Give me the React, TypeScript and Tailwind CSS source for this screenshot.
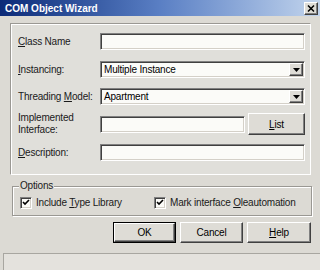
import React from 'react';

const font = { fontFamily: '"Liberation Sans", Arial, sans-serif' };

const sunken =
  'border border-t-[#808080] border-l-[#808080] border-b-white border-r-white shadow-[inset_1px_1px_0_#404040,inset_-1px_-1px_0_#d4d0c8] bg-[#fbfbf8]';
const raised =
  'border border-t-white border-l-white border-b-[#404040] border-r-[#404040] shadow-[inset_-1px_-1px_0_#808080] bg-[#dedcd6]';

function U({ c }: { c: string }) {
  return <span className="underline underline-offset-1">{c}</span>;
}

function Label({ children }: { children: React.ReactNode }) {
  return <div className="w-[82px] shrink-0 leading-[12px] text-[#1a1a1a]">{children}</div>;
}

function Select({ value }: { value: string }) {
  return (
    <div className={`${sunken} flex-1 h-full flex items-center`}>
      <span className="flex-1 pl-[3px] text-black">{value}</span>
      <div className={`${raised} w-[14px] h-[13px] mr-[1px] flex items-center justify-center`}>
        <svg width="7" height="4" viewBox="0 0 7 4">
          <path d="M0 0h7L3.5 4z" fill="#000" />
        </svg>
      </div>
    </div>
  );
}

function Check({ label }: { label: React.ReactNode }) {
  return (
    <div className="flex items-center gap-[4px]">
      <div className={`${sunken} w-[12px] h-[12px] flex items-center justify-center`}>
        <svg width="8" height="7" viewBox="0 0 8 7">
          <path d="M1 3l2 2 4-4" stroke="#000" strokeWidth="1.6" fill="none" />
        </svg>
      </div>
      <span>{label}</span>
    </div>
  );
}

export default function App() {
  return (
    <div className="w-[320px] h-[270px] bg-[#dcdad4] text-[10px] tracking-[-0.2px] flex flex-col overflow-hidden" style={font}>
      {/* title bar */}
      <div className="h-[16px] shrink-0 flex items-center bg-gradient-to-r from-[#0c2a78] via-[#5a7fc4] to-[#c2d4ec]">
        <span className="flex-1 pl-[5px] text-white font-bold text-[10px] tracking-normal">COM Object Wizard</span>
        <div className={`${raised} w-[14px] h-[13px] mr-[2px] flex items-center justify-center`}>
          <svg width="8" height="7" viewBox="0 0 8 7">
            <path d="M1 0.5l6 6M7 0.5l-6 6" stroke="#000" strokeWidth="1.5" />
          </svg>
        </div>
      </div>

      {/* main panel */}
      <div className="ml-[10px] mt-[7px] w-[301px] h-[152px] shrink-0 border border-t-[#9a9893] border-l-[#9a9893] border-b-white border-r-white shadow-[inset_1px_1px_0_white] bg-[#e0dfda] flex flex-col pl-[7px] pr-[5px]">
        <div className="mt-[9px] h-[17px] flex items-center">
          <Label>
            <U c="C" />lass Name
          </Label>
          <div className={`${sunken} flex-1 h-full`} />
        </div>
        <div className="mt-[11px] h-[17px] flex items-center">
          <Label>
            <U c="I" />nstancing:
          </Label>
          <Select value="Multiple Instance" />
        </div>
        <div className="mt-[10px] h-[17px] flex items-center">
          <Label>
            Threading <U c="M" />odel:
          </Label>
          <Select value="Apartment" />
        </div>
        <div className="mt-[8px] h-[22px] flex items-center">
          <Label>
            Implemented
            <br />
            Interface:
          </Label>
          <div className={`${sunken} w-[145px] h-[17px] mt-[1px]`} />
          <div className={`${raised} ml-[3px] flex-1 h-full flex items-center justify-center text-black`}>
            <U c="L" />ist
          </div>
        </div>
        <div className="mt-[9px] h-[17px] flex items-center">
          <Label>
            <U c="D" />escription:
          </Label>
          <div className={`${sunken} flex-1 h-full`} />
        </div>
      </div>

      {/* options group */}
      <div className="relative ml-[12px] mt-[11px] w-[300px] h-[30px] shrink-0 border border-[#9a9893] shadow-[inset_1px_1px_0_white,1px_1px_0_white] flex items-center pl-[7px] text-[#1a1a1a]">
        <span className="absolute left-[6px] top-[-7px] px-[1px] bg-[#dcdad4] leading-[12px]">Options</span>
        <div className="w-[134px] mt-[3px]">
          <Check label={<>Include <U c="T" />ype Library</>} />
        </div>
        <div className="mt-[3px]">
          <Check label={<>Mark interface <U c="O" />leautomation</>} />
        </div>
      </div>

      {/* buttons */}
      <div className="mt-[6px] ml-[113px] flex gap-[4px] shrink-0 text-black">
        <div className="w-[63px] h-[21px] border border-black">
          <div className={`${raised} w-full h-full flex items-center justify-center`}>OK</div>
        </div>
        <div className={`${raised} w-[63px] h-[21px] flex items-center justify-center`}>Cancel</div>
        <div className={`${raised} w-[64px] h-[21px] flex items-center justify-center`}>
          <U c="H" />elp
        </div>
      </div>

      {/* window behind */}
      <div className="mt-[10px] ml-[3px] flex-1 border-t border-l border-[#a8a6a0] bg-[#e4e2dd]" />
    </div>
  );
}
